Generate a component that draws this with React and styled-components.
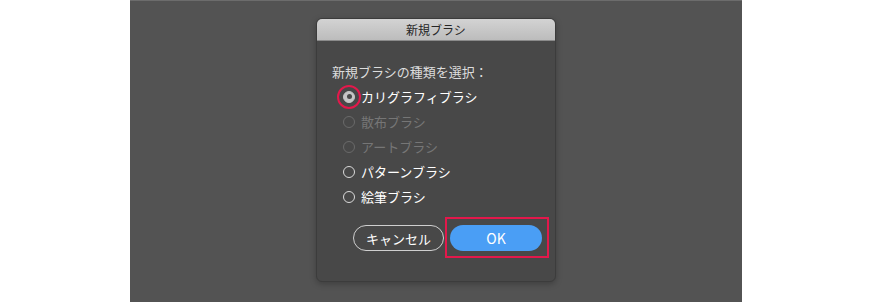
import React from "react";
import styled, { createGlobalStyle } from "styled-components";

const Global = createGlobalStyle`
  html, body { margin: 0; padding: 0; background: #ffffff; }
  body { font-family: "Noto Sans CJK JP", "Noto Sans", sans-serif; }
`;

const Page = styled.div`
  width: 873px;
  height: 302px;
  display: flex;
  padding-left: 130px;
  box-sizing: border-box;
`;

const Stage = styled.div`
  width: 612px;
  height: 302px;
  background: #535353;
  border-top: 1px solid #6c6c6c;
  box-sizing: border-box;
  display: flex;
  justify-content: center;
  padding-top: 17px;
`;

const Dialog = styled.div`
  width: 240px;
  height: 264px;
  box-sizing: border-box;
  background: #484848;
  border: 1px solid #3c3c3c;
  border-radius: 6px;
  box-shadow: 0 2px 6px rgba(0, 0, 0, 0.25);
  display: flex;
  flex-direction: column;
  overflow: hidden;
`;

const TitleBar = styled.div`
  height: 22px;
  flex: none;
  background: linear-gradient(#d3d3d3, #bcbcbc);
  border-bottom: 1px solid #8a8a8a;
  box-sizing: border-box;
  display: flex;
  align-items: center;
  justify-content: center;
  font-size: 12px;
  color: #262626;
`;

const Body = styled.div`
  flex: 1;
  display: flex;
  flex-direction: column;
  padding: 22px 0 0 15px;
`;

const Prompt = styled.div`
  font-size: 13px;
  line-height: 18px;
  color: #dcdcdc;
  height: 18px;
`;

const RadioList = styled.div`
  display: flex;
  flex-direction: column;
  margin-top: 3px;
`;

const Row = styled.div`
  position: relative;
  height: 25px;
  display: flex;
  align-items: center;
  gap: 6px;
  padding-left: 11px;
  font-size: 13px;
  font-weight: 400;
  color: ${(p) => (p.$disabled ? "#767676" : "#ffffff")};
`;

const Circle = styled.span`
  width: 12px;
  height: 12px;
  box-sizing: border-box;
  border-radius: 50%;
  flex: none;
  border: 1.5px solid ${(p) => (p.$disabled ? "#6a6a6a" : "#dadada")};
  background: ${(p) => (p.$checked ? "#c6c6c6" : "transparent")};
  display: flex;
  align-items: center;
  justify-content: center;
  ${(p) => (p.$checked ? "border-color: #c6c6c6;" : "")}
`;

const Dot = styled.span`
  width: 5px;
  height: 5px;
  border-radius: 50%;
  background: #4a4a4a;
`;

const RedRing = styled.span`
  position: absolute;
  left: 5px;
  top: 0.5px;
  width: 24px;
  height: 24px;
  box-sizing: border-box;
  border: 2px solid #e3184b;
  border-radius: 50%;
`;

const Buttons = styled.div`
  display: flex;
  gap: 6px;
  margin-top: 16px;
  padding-left: 21px;
`;

const Pill = styled.button`
  position: relative;
  width: ${(p) => p.$w}px;
  height: 26px;
  border-radius: 13px;
  box-sizing: border-box;
  font-family: inherit;
  font-size: ${(p) => (p.$primary ? 14 : 13)}px;
  font-weight: 400;
  color: #ffffff;
  padding: 0;
  border: ${(p) => (p.$primary ? "none" : "1.5px solid #cfcfcf")};
  background: ${(p) => (p.$primary ? "#4a9ef5" : "transparent")};
  display: flex;
  align-items: center;
  justify-content: center;
`;

const RedBox = styled.span`
  position: absolute;
  left: -5px;
  top: -8px;
  width: 104px;
  height: 41px;
  box-sizing: border-box;
  border: 2px solid #e3184b;
  pointer-events: none;
`;

const items = [
  { label: "カリグラフィブラシ", checked: true },
  { label: "散布ブラシ", disabled: true },
  { label: "アートブラシ", disabled: true },
  { label: "パターンブラシ" },
  { label: "絵筆ブラシ" },
];

export default function App() {
  return (
    <>
      <Global />
      <Page>
        <Stage>
          <Dialog>
            <TitleBar>新規ブラシ</TitleBar>
            <Body>
              <Prompt>新規ブラシの種類を選択：</Prompt>
              <RadioList>
                {items.map((it) => (
                  <Row key={it.label} $disabled={it.disabled}>
                    <Circle $checked={it.checked} $disabled={it.disabled}>
                      {it.checked && <Dot />}
                    </Circle>
                    {it.label}
                    {it.checked && <RedRing />}
                  </Row>
                ))}
              </RadioList>
              <Buttons>
                <Pill $w={91}>キャンセル</Pill>
                <Pill $w={92} $primary>
                  OK
                  <RedBox />
                </Pill>
              </Buttons>
            </Body>
          </Dialog>
        </Stage>
      </Page>
    </>
  );
}
